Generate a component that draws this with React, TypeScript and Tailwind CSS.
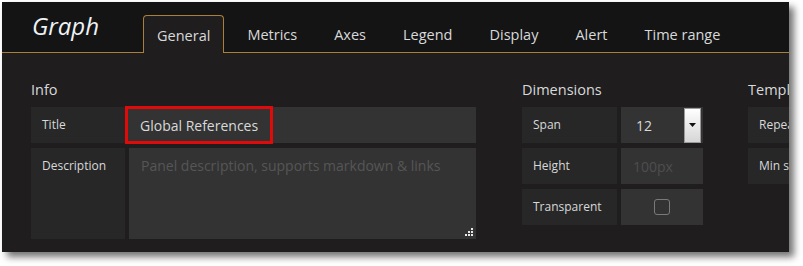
import React from 'react';

const tabs = ['General', 'Metrics', 'Axes', 'Legend', 'Display', 'Alert', 'Time range'];

const labelCls = 'flex items-center bg-[#272727] px-[11px] text-[12px] text-[#d8d9da] whitespace-nowrap';
const inputBase = 'flex items-center bg-[#333333] px-[12px] text-[14px] whitespace-nowrap';

function SelectArrow() {
  return (
    <div className="ml-auto mr-[1px] flex h-[35px] w-[17px] items-center justify-center border border-[#9a9a9a] bg-gradient-to-b from-[#ffffff] to-[#d6d6d6]">
      <svg width="7" height="4" viewBox="0 0 7 4">
        <path d="M0 0h7L3.5 4z" fill="#111" />
      </svg>
    </div>
  );
}

function ResizeGrip() {
  return (
    <svg width="8" height="8" viewBox="0 0 8 8" className="absolute bottom-[3px] right-[3px]">
      <rect x="6" y="0" width="2" height="2" fill="#e8e8e8" />
      <rect x="3" y="3" width="2" height="2" fill="#e8e8e8" />
      <rect x="6" y="3" width="2" height="2" fill="#e8e8e8" />
      <rect x="0" y="6" width="2" height="2" fill="#e8e8e8" />
      <rect x="3" y="6" width="2" height="2" fill="#e8e8e8" />
      <rect x="6" y="6" width="2" height="2" fill="#e8e8e8" />
    </svg>
  );
}

export default function App() {
  return (
    <div className="h-[266px] w-[803px] bg-white pl-[2px] pt-[2px]" style={{ fontFamily: '"Open Sans", "Noto Sans", sans-serif' }}>
      <div className="h-[250px] w-[787px] overflow-hidden bg-[#1f1d1e] shadow-[5px_5px_7px_rgba(0,0,0,0.55)]">
        <div className="flex h-[51px] items-end border-b border-[#a9803a] bg-[#141414]">
          <div className="mb-[11px] ml-[30px] w-[111px] shrink-0 text-[24px] italic leading-[30px] text-[#eef2f6]">Graph</div>
          <div className="flex items-end gap-[9px]">
            {tabs.map((t, i) =>
              i === 0 ? (
                <div
                  key={t}
                  className="-mb-[1px] flex h-[38px] items-center whitespace-nowrap rounded-t-[4px] border border-b-0 border-[#a9803a] bg-[#1f1d1e] px-[13px] pt-[2px] text-[14.5px] text-[#d8d9da]"
                >
                  {t}
                </div>
              ) : (
                <div key={t} className="flex h-[37px] items-center whitespace-nowrap px-[14px] pt-[2px] text-[14.5px] text-[#d8d9da]">
                  {t}
                </div>
              )
            )}
          </div>
        </div>

        <div className="flex pl-[29px] pt-[27px]">
          <div className="w-[445px] shrink-0">
            <div className="mb-[7px] text-[14.5px] leading-[20px] text-[#d8d9da]">Info</div>
            <div className="flex flex-col gap-[5px]">
              <div className="flex h-[36px] gap-[3px]">
                <div className={`${labelCls} w-[94px]`}>Title</div>
                <div className={`${inputBase} relative flex-1 text-[#d8d9da]`}>
                  <span>Global References</span>
                  <div className="absolute -left-[3px] -top-[1px] h-[38px] w-[148px] border-[3px] border-[#e00a0a]" />
                </div>
              </div>
              <div className="flex h-[91px] gap-[4px]">
                <div className={`${labelCls} w-[94px] items-start pt-[9px]`}>Description</div>
                <div className="relative flex-1 whitespace-nowrap bg-[#333333] px-[12px] pt-[7px] text-[14px] text-[#565656]">
                  Panel description, supports markdown &amp; links
                  <ResizeGrip />
                </div>
              </div>
            </div>
          </div>

          <div className="ml-[46px] w-[181px] shrink-0">
            <div className="mb-[7px] text-[14.5px] leading-[20px] text-[#d8d9da]">Dimensions</div>
            <div className="flex flex-col gap-[5px]">
              <div className="flex h-[36px] gap-[4px]">
                <div className={`${labelCls} w-[95px]`}>Span</div>
                <div className={`${inputBase} flex-1 pl-[15px] pr-[1px] text-[#d8d9da]`}>
                  <span>12</span>
                  <SelectArrow />
                </div>
              </div>
              <div className="flex h-[36px] gap-[4px]">
                <div className={`${labelCls} w-[95px]`}>Height</div>
                <div className={`${inputBase} flex-1 text-[#4e4e4e]`}>100px</div>
              </div>
              <div className="flex h-[36px] gap-[4px]">
                <div className={`${labelCls} w-[95px]`}>Transparent</div>
                <div className="flex flex-1 items-center justify-center bg-[#333333]">
                  <div className="h-[16px] w-[16px] rounded-[3px] border-[1.5px] border-[#7a7a7a]" />
                </div>
              </div>
            </div>
          </div>

          <div className="ml-[45px] w-[200px] shrink-0">
            <div className="mb-[7px] text-[14.5px] leading-[20px] text-[#d8d9da]">Templating</div>
            <div className="flex flex-col gap-[5px]">
              <div className="flex h-[36px] gap-[4px]">
                <div className={`${labelCls} w-[95px]`}>Repeat</div>
              </div>
              <div className="flex h-[36px] gap-[4px]">
                <div className={`${labelCls} w-[95px]`}>Min span</div>
              </div>
            </div>
          </div>
        </div>
      </div>
    </div>
  );
}
